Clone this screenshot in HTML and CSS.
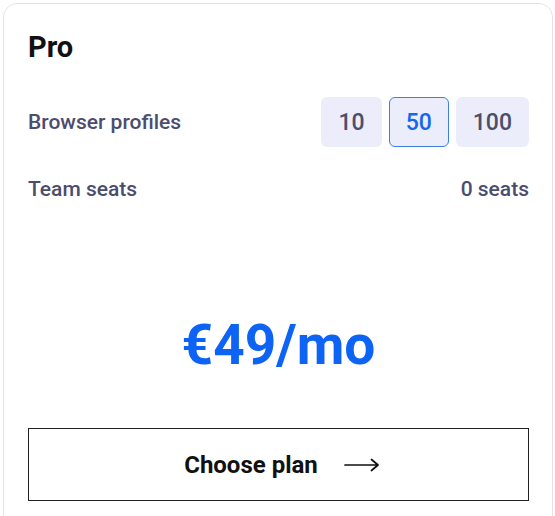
FILE: index.html
```html
<!DOCTYPE html>
<html lang="en">
<head>
  <meta charset="UTF-8">
  <meta name="viewport" content="width=device-width, initial-scale=1.0">
  <title>Pro plan</title>
  <link rel="stylesheet" href="styles.css">
</head>
<body>

<div class="card">
  <h1 class="plan-name">Pro</h1>

  <div class="row profiles">
    <span class="label">Browser profiles</span>
    <div class="options">
      <button class="opt">10</button>
      <button class="opt selected">50</button>
      <button class="opt">100</button>
    </div>
  </div>

  <div class="row seats">
    <span class="label">Team seats</span>
    <span class="value">0 seats</span>
  </div>

  <div class="price">€49/mo</div>

  <button class="choose">
    <span>Choose plan</span>
    <svg class="arrow" width="36" height="14" viewBox="0 0 36 14">
      <path d="M1 7H34M27.5 1.5L34 7l-6.5 5.5" fill="none" stroke="#111" stroke-width="1.7" stroke-linecap="round" stroke-linejoin="round"/>
    </svg>
  </button>
</div>

</body>
</html>
```

FILE: styles.css
```css
body {
  margin: 0;
  padding: 3px 2px 0 3px;
  font-family: Roboto, "Noto Sans", Arial, sans-serif;
  background-color: #fff;
}
.card {
  border: 1px solid #e4e4e7;
  border-radius: 14px;
  padding: 26px 23px 40px 24px;
  height: 560px;
  box-sizing: border-box;
}
.plan-name {
  margin: 0;
  font-size: 29px;
  line-height: 34px;
  font-weight: 700;
  color: #111;
}
.row {
  display: flex;
  align-items: center;
  justify-content: space-between;
  font-size: 21px;
  font-weight: 500;
  color: #4b4d6e;
}
.profiles {
  margin-top: 33px;
}
.seats {
  margin-top: 30px;
  line-height: 24px;
}
.options {
  display: flex;
  gap: 7px;
}
.opt {
  min-width: 59px;
  height: 50px;
  padding: 0 16px;
  border: 1px solid transparent;
  border-radius: 6px;
  background-color: #ecedfb;
  font-family: inherit;
  font-size: 23px;
  font-weight: 500;
  color: #4b4d6e;
}
.opt.selected {
  border-color: #3d7fe6;
  color: #1565f2;
}
.price {
  margin-top: 113px;
  text-align: center;
  font-size: 55px;
  line-height: 62px;
  font-weight: 700;
  color: #0d63f3;
}
.choose {
  display: flex;
  align-items: center;
  justify-content: center;
  gap: 26px;
  width: 100%;
  height: 73px;
  margin-top: 52px;
  padding: 0 0 0 7px;
  border: 1px solid #222;
  background-color: #fff;
  font-family: inherit;
  font-size: 24px;
  font-weight: 700;
  color: #111;
}
```
